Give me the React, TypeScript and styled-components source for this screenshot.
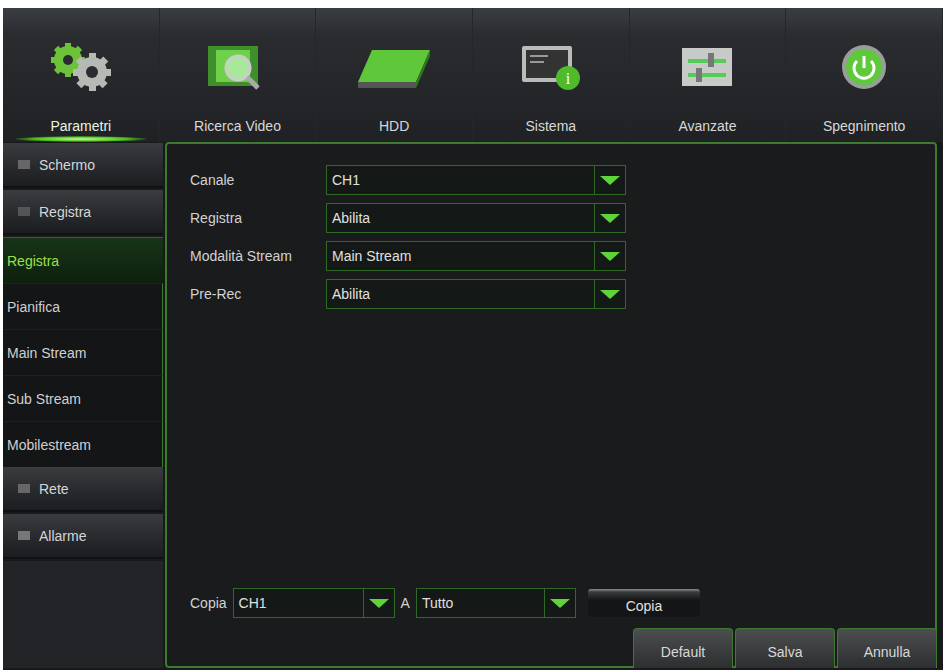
import React from 'react';
import styled, { createGlobalStyle } from 'styled-components';

const Global = createGlobalStyle`
  html, body { margin: 0; background: #fff; }
  body { font-family: "Liberation Sans", Arial, sans-serif; }
`;

const Screen = styled.div`
  margin: 8px 0 0 3px;
  width: 940px;
  height: 662px;
  background: #18191b;
  display: flex;
  flex-direction: column;
  overflow: hidden;
`;

const TopBar = styled.div`
  height: 134px;
  display: grid;
  grid-template-columns: repeat(6, 1fr);
  background: linear-gradient(#3a3d42 0%, #2a2c30 20%, #1f2124 100%);
`;

const Tab = styled.div<{ $active?: boolean }>`
  display: flex;
  flex-direction: column;
  align-items: center;
  justify-content: flex-end;
  padding-bottom: 8px;
  position: relative;
  border-right: 1px solid #24272a;
  color: ${p => (p.$active ? '#e8f5e0' : '#d8d8d8')};
  font-size: 14px;
  svg { margin-bottom: 26px; }
`;

const Glow = styled.div`
  position: absolute;
  bottom: 0;
  left: 12px;
  right: 12px;
  height: 6px;
  border-radius: 50%;
  background: radial-gradient(#c8ff90, #4ac01c 50%, transparent 75%);
`;

const Body = styled.div`
  flex: 1;
  display: flex;
  gap: 2px;
  padding: 0 6px 2px 0;
`;

const Side = styled.div`
  width: 160px;
  display: flex;
  flex-direction: column;
  padding-top: 1px;
`;

const Group = styled.div`
  height: 43px;
  margin-bottom: 2px;
  display: flex;
  align-items: center;
  gap: 8px;
  padding-left: 14px;
  color: #d6d6d6;
  font-size: 14px;
  background: linear-gradient(#3a3c40, #26282b 60%, #1c1d20);
  border-bottom: 2px solid #101112;
`;

const SubItem = styled.div<{ $active?: boolean }>`
  height: 45px;
  display: flex;
  align-items: center;
  padding-left: 4px;
  font-size: 14px;
  color: ${p => (p.$active ? '#9be04a' : '#d0d0d0')};
  background: ${p => (p.$active ? 'linear-gradient(#173417, #0e200e)' : '#141517')};
  border-top: ${p => (p.$active ? '1px solid #2c6a24' : '1px solid #1e2022')};
  border-right: ${p => (p.$active ? 'none' : '1px solid #3b7a2c')};
`;

const Filler = styled.div`
  flex: 1;
  background: #222427;
`;

const Panel = styled.div`
  flex: 1;
  border: 2px solid #3d7a2d;
  border-radius: 4px;
  background: #1a1b1d;
  display: flex;
  flex-direction: column;
  position: relative;
  padding: 21px 0 0 23px;
`;

const Form = styled.div`
  display: grid;
  grid-template-columns: 136px 300px;
  row-gap: 8px;
  align-items: center;
`;

const Label = styled.div`
  color: #d2d2d2;
  font-size: 14px;
`;

const SelectBox = styled.div<{ $w: number }>`
  width: ${p => p.$w}px;
  height: 30px;
  box-sizing: border-box;
  border: 1px solid #2f6a25;
  background: #141816;
  display: flex;
  align-items: center;
  color: #e0e0e0;
  font-size: 14px;
  span { flex: 1; padding-left: 5px; }
`;

const Arrow = styled.div`
  width: 30px;
  height: 100%;
  border-left: 1px solid #2f6a25;
  display: flex;
  align-items: center;
  justify-content: center;
  &::after {
    content: '';
    border-left: 10px solid transparent;
    border-right: 10px solid transparent;
    border-top: 9px solid #5fd33a;
  }
`;

const CopyRow = styled.div`
  margin-top: auto;
  margin-bottom: 48px;
  display: flex;
  align-items: center;
  gap: 6px;
  color: #d2d2d2;
  font-size: 14px;
`;

const CopyBtn = styled.div`
  margin-left: 6px;
  width: 112px;
  height: 28px;
  display: flex;
  align-items: center;
  justify-content: center;
  padding-top: 6px;
  box-sizing: border-box;
  background: linear-gradient(#8a8c8e 0, #3a3c3e 3px, #141516 40%);
  border-radius: 3px;
  color: #e0e0e0;
`;

const Actions = styled.div`
  position: absolute;
  right: -2px;
  bottom: -2px;
  display: flex;
  gap: 2px;
`;

const ActBtn = styled.div`
  width: 100px;
  height: 40px;
  display: flex;
  align-items: flex-end;
  justify-content: center;
  padding-bottom: 8px;
  box-sizing: border-box;
  background: linear-gradient(#4c4e50, #2c2e30);
  border: 1px solid #3d7a2d;
  border-bottom: none;
  border-radius: 4px 4px 0 0;
  color: #d8d8d8;
  font-size: 14px;
`;

const Gears = () => (
  <svg width="70" height="50" viewBox="0 0 70 50">
    <circle cx="22" cy="18" r="14" fill="#6dc23a" />
    {[0, 45, 90, 135].map(a => <rect key={a} x="19" y="1" width="6" height="34" fill="#6dc23a" transform={`rotate(${a} 22 18)`} />)}
    <circle cx="22" cy="18" r="5" fill="#2a2c30" />
    <circle cx="46" cy="30" r="15" fill="#b5bab5" />
    {[0, 45, 90, 135].map(a => <rect key={a} x="43" y="11" width="7" height="38" fill="#b5bab5" transform={`rotate(${a} 46 30)`} />)}
    <circle cx="46" cy="30" r="6" fill="#2a2c30" />
  </svg>
);
const Film = () => (
  <svg width="70" height="50" viewBox="0 0 70 50">
    <rect x="6" y="4" width="50" height="40" fill="#3f8f2c" />
    <rect x="14" y="8" width="34" height="32" fill="#6fd14a" />
    <circle cx="36" cy="26" r="12" fill="#a7e89a" stroke="#ccc" strokeWidth="3" />
    <line x1="45" y1="35" x2="56" y2="46" stroke="#aaa" strokeWidth="5" />
  </svg>
);
const Hdd = () => (
  <svg width="80" height="50" viewBox="0 0 80 50">
    <polygon points="18,8 76,8 62,40 4,40" fill="#5fc83a" />
    <polygon points="4,40 62,40 62,46 4,46" fill="#555" />
    <polygon points="62,40 76,8 76,14 62,46" fill="#2f7a1e" />
  </svg>
);
const Sys = () => (
  <svg width="70" height="50" viewBox="0 0 70 50">
    <rect x="6" y="4" width="50" height="36" rx="2" fill="#bbb" />
    <rect x="10" y="8" width="42" height="28" fill="#333" />
    <line x1="14" y1="14" x2="32" y2="14" stroke="#999" strokeWidth="2" />
    <line x1="14" y1="20" x2="28" y2="20" stroke="#999" strokeWidth="2" />
    <circle cx="52" cy="36" r="12" fill="#4fba2a" />
    <text x="52" y="42" fontSize="16" fill="#fff" textAnchor="middle" fontFamily="Liberation Serif">i</text>
  </svg>
);
const Sliders = () => (
  <svg width="70" height="50" viewBox="0 0 70 50">
    <rect x="10" y="6" width="50" height="38" fill="#c8cac8" />
    <rect x="16" y="17" width="38" height="4" fill="#5c5" />
    <rect x="16" y="31" width="38" height="4" fill="#5c5" />
    <rect x="36" y="11" width="6" height="14" fill="#777" />
    <rect x="24" y="26" width="6" height="14" fill="#777" />
  </svg>
);
const Power = () => (
  <svg width="70" height="50" viewBox="0 0 70 50">
    <circle cx="35" cy="25" r="22" fill="#9a9e9a" />
    <circle cx="35" cy="25" r="18" fill="#5ec93a" />
    <path d="M28 19 a10 10 0 1 0 14 0" fill="none" stroke="#fff" strokeWidth="3" />
    <line x1="35" y1="14" x2="35" y2="26" stroke="#fff" strokeWidth="3" />
  </svg>
);

const tabs = [
  { label: 'Parametri', icon: <Gears />, active: true },
  { label: 'Ricerca Video', icon: <Film /> },
  { label: 'HDD', icon: <Hdd /> },
  { label: 'Sistema', icon: <Sys /> },
  { label: 'Avanzate', icon: <Sliders /> },
  { label: 'Spegnimento', icon: <Power /> },
];

const Ico = ({ c }: { c: string }) => (
  <svg width="14" height="14" viewBox="0 0 14 14"><rect x="1" y="2" width="12" height="9" fill={c} /></svg>
);

const Select = ({ v, w }: { v: string; w: number }) => (
  <SelectBox $w={w}><span>{v}</span><Arrow /></SelectBox>
);

export default function App() {
  return (
    <>
      <Global />
      <Screen>
        <TopBar>
          {tabs.map(t => (
            <Tab key={t.label} $active={t.active}>
              {t.icon}
              {t.label}
              {t.active && <Glow />}
            </Tab>
          ))}
        </TopBar>
        <Body>
          <Side>
            <Group><Ico c="#666" />Schermo</Group>
            <Group><Ico c="#555" />Registra</Group>
            <SubItem $active>Registra</SubItem>
            <SubItem>Pianifica</SubItem>
            <SubItem>Main Stream</SubItem>
            <SubItem>Sub Stream</SubItem>
            <SubItem>Mobilestream</SubItem>
            <Group><Ico c="#666" />Rete</Group>
            <Group><Ico c="#777" />Allarme</Group>
            <Filler />
          </Side>
          <Panel>
            <Form>
              <Label>Canale</Label><Select v="CH1" w={300} />
              <Label>Registra</Label><Select v="Abilita" w={300} />
              <Label>Modalità Stream</Label><Select v="Main Stream" w={300} />
              <Label>Pre-Rec</Label><Select v="Abilita" w={300} />
            </Form>
            <CopyRow>
              Copia <Select v="CH1" w={162} /> A <Select v="Tutto" w={160} />
              <CopyBtn>Copia</CopyBtn>
            </CopyRow>
            <Actions>
              <ActBtn>Default</ActBtn>
              <ActBtn>Salva</ActBtn>
              <ActBtn>Annulla</ActBtn>
            </Actions>
          </Panel>
        </Body>
      </Screen>
    </>
  );
}
